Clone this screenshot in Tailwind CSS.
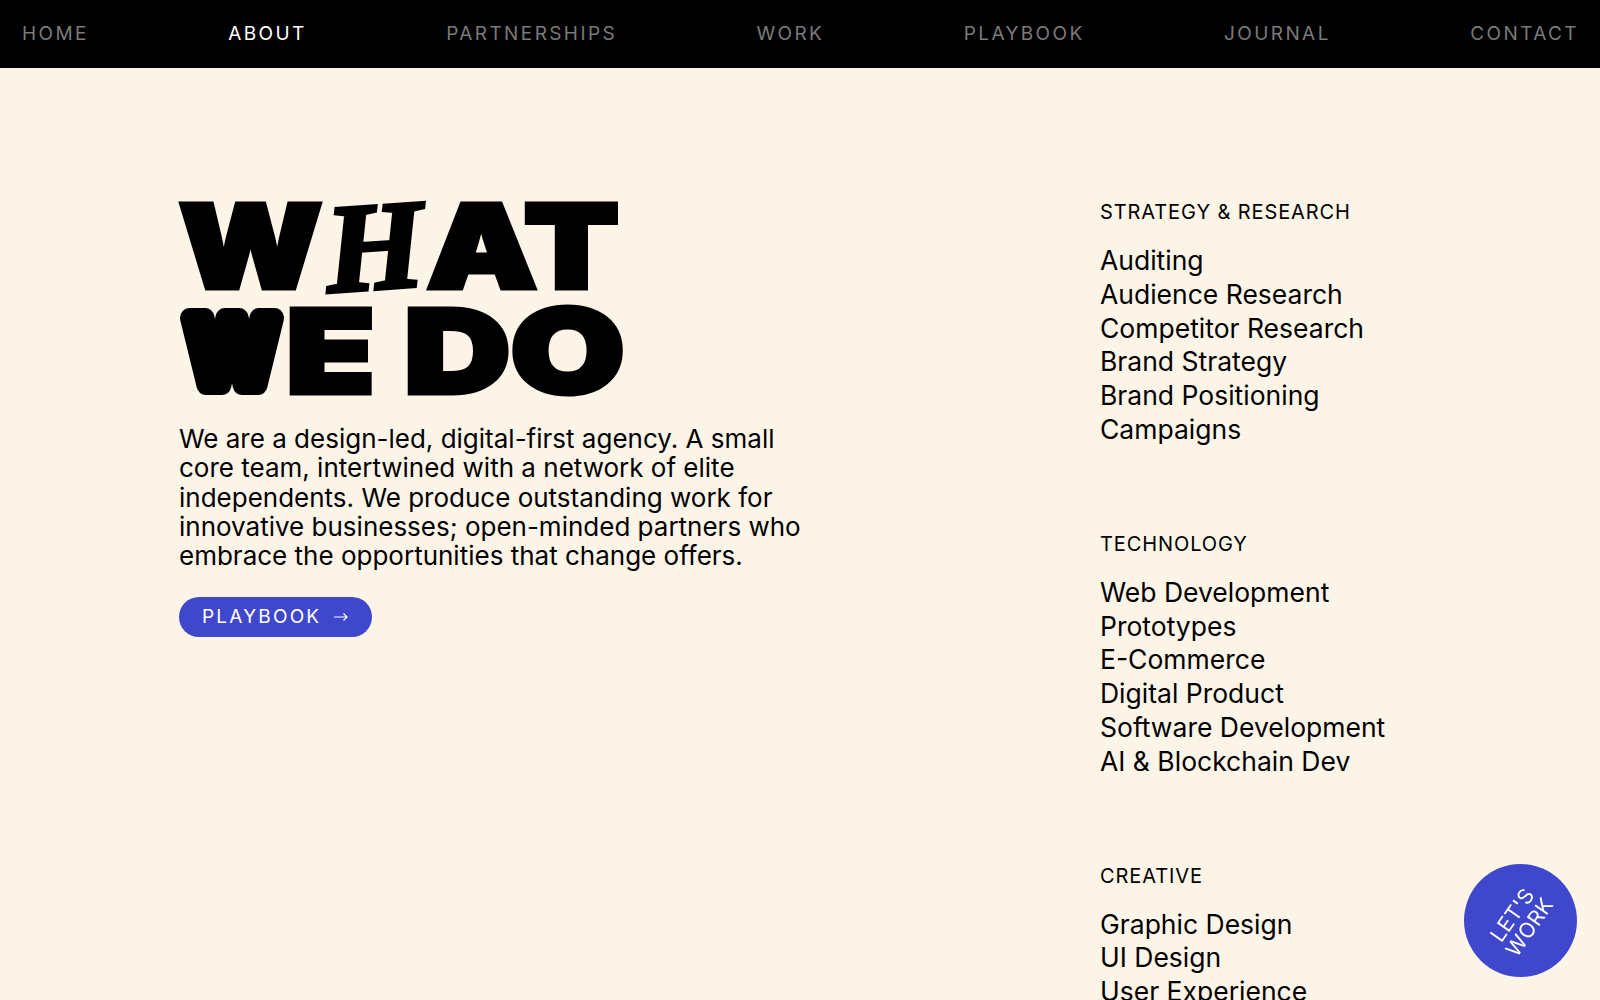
<!DOCTYPE html>
<html lang="en">
<head>
    <meta charset="UTF-8">
    <meta name="viewport" content="width=device-width, initial-scale=1.0">
    <title>What We Do</title>
    <script src="https://cdn.jsdelivr.net/npm/@tailwindcss/browser@4"></script>
</head>
<body class="h-screen overflow-hidden bg-[#fdf4e8] text-black font-['Inter',sans-serif]">

    <!-- nav -->
    <nav class="h-[68px] bg-black flex items-center justify-between pl-[22px] pr-[21px] pt-[1px] text-[19px] tracking-[2.4px] text-[#7a7a7a]">
        <a href="#">HOME</a>
        <a href="#" class="text-white">ABOUT</a>
        <a href="#">PARTNERSHIPS</a>
        <a href="#">WORK</a>
        <a href="#">PLAYBOOK</a>
        <a href="#">JOURNAL</a>
        <a href="#">CONTACT</a>
    </nav>

    <main class="flex pl-[179px] pt-[126px]">
        <!-- left -->
        <section class="w-[921px] shrink-0">
            <h1 class="font-black text-[116px] leading-[105px] h-[210px] [-webkit-text-stroke:5px_#000]">
                <div class="flex items-center h-[105px]">
                    <span class="w-[143px] origin-left scale-x-[1.14]">W</span>
                    <span class="w-[105px] text-center font-['Liberation_Serif',serif] italic font-bold text-[126px] [-webkit-text-stroke:4px_#000] -rotate-[4deg]">H</span>
                    <span class="origin-left scale-x-[1.19]">AT</span>
                </div>
                <div class="flex items-center h-[105px]">
                    <svg width="107" height="92" viewBox="0 0 107 92" class="shrink-0 overflow-visible" aria-label="W">
                        <text transform="translate(53 79) scale(.92 1)" text-anchor="middle" font-family="Inter" font-weight="800" font-size="92" fill="#000" stroke="#000" stroke-width="20" stroke-linejoin="round">W</text>
                    </svg>
                    <span class="w-[118px] origin-left scale-x-[1.25]">E</span>
                    <span class="origin-left scale-x-[1.27]">DO</span>
                </div>
            </h1>
            <p class="mt-[20px] w-[640px] text-[26px] leading-[29.3px]">
                We are a design-led, digital-first agency. A small core team, intertwined with a network of elite independents. We produce outstanding work for innovative businesses; open-minded partners who embrace the opportunities that change offers.
            </p>
            <a href="#" class="mt-[27px] w-[193px] h-[40px] rounded-full bg-[#3f48cc] text-white text-[19px] tracking-[2.2px] flex items-center pl-[23px] gap-[13px]">
                PLAYBOOK
                <svg width="14" height="10" viewBox="0 0 14 10" fill="none" stroke="currentColor" stroke-width="1.2">
                    <path d="M0 5h13M9.5 1.5 13 5 9.5 8.5"/>
                </svg>
            </a>
        </section>

        <!-- right -->
        <section class="flex flex-col gap-[85px]">
            <div class="mt-[6px]">
                <h2 class="text-[20px] leading-[24px] tracking-[0.9px]">STRATEGY &amp; RESEARCH</h2>
                <ul class="mt-[20px] text-[26.5px] leading-[33.8px]">
                    <li>Auditing</li>
                    <li>Audience Research</li>
                    <li>Competitor Research</li>
                    <li>Brand Strategy</li>
                    <li>Brand Positioning</li>
                    <li>Campaigns</li>
                </ul>
            </div>
            <div>
                <h2 class="text-[20px] leading-[24px] tracking-[0.9px]">TECHNOLOGY</h2>
                <ul class="mt-[20px] text-[26.5px] leading-[33.8px]">
                    <li>Web Development</li>
                    <li>Prototypes</li>
                    <li>E-Commerce</li>
                    <li>Digital Product</li>
                    <li>Software Development</li>
                    <li>AI &amp; Blockchain Dev</li>
                </ul>
            </div>
            <div>
                <h2 class="text-[20px] leading-[24px] tracking-[0.9px]">CREATIVE</h2>
                <ul class="mt-[20px] text-[26.5px] leading-[33.8px]">
                    <li>Graphic Design</li>
                    <li>UI Design</li>
                    <li>User Experience</li>
                </ul>
            </div>
        </section>
    </main>

    <!-- floating button -->
    <a href="#" class="fixed right-[23px] bottom-[23px] w-[113px] h-[113px] rounded-full bg-[#3f48cc] text-white flex items-center justify-center">
        <span class="-rotate-[55deg] text-center text-[21px] leading-[21px] tracking-[0.3px]">LET'S<br>WORK</span>
    </a>

</body>
</html>
